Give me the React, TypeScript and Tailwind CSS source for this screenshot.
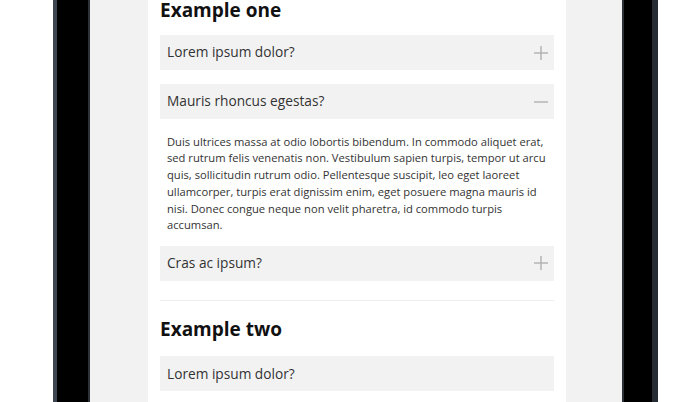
import { useState } from "react";

type Item = { q: string; a?: string };

const SECTIONS: { title: string; items: Item[]; icons: boolean }[] = [
  {
    title: "Example one",
    icons: true,
    items: [
      { q: "Lorem ipsum dolor?" },
      {
        q: "Mauris rhoncus egestas?",
        a: "Duis ultrices massa at odio lobortis bibendum. In commodo aliquet erat, sed rutrum felis venenatis non. Vestibulum sapien turpis, tempor ut arcu quis, sollicitudin rutrum odio. Pellentesque suscipit, leo eget laoreet ullamcorper, turpis erat dignissim enim, eget posuere magna mauris id nisi. Donec congue neque non velit pharetra, id commodo turpis accumsan.",
      },
      { q: "Cras ac ipsum?" },
    ],
  },
  {
    title: "Example two",
    icons: false,
    items: [{ q: "Lorem ipsum dolor?" }, { q: "Mauris rhoncus egestas?" }],
  },
];

function ToggleIcon({ open }: { open: boolean }) {
  return (
    <svg width="14" height="14" viewBox="0 0 14 14" className="shrink-0">
      <path d="M0 7h14" stroke="#b0b0b0" strokeWidth="1.4" />
      {!open && <path d="M7 0v14" stroke="#b0b0b0" strokeWidth="1.4" />}
    </svg>
  );
}

function Accordion({ items, initial, icons }: { items: Item[]; initial: number; icons: boolean }) {
  const [open, setOpen] = useState<number>(initial);
  return (
    <div className="flex flex-col">
      {items.map((item, i) => {
        const isOpen = open === i;
        return (
          <div key={i} className="mb-[14px]">
            <button
              onClick={() => setOpen(isOpen ? -1 : i)}
              className="w-full h-[35px] bg-[#f2f2f2] pl-[7px] pr-[6px] flex items-center justify-between text-left text-[13.7px] text-[#333]"
            >
              <span>{item.q}</span>
              {icons && <ToggleIcon open={isOpen} />}
            </button>
            {isOpen && item.a && (
              <p className="pl-[7px] pr-[6px] pt-[14.5px] -mb-[2.5px] text-[11.2px] leading-[16.8px] text-[#333]">
                {item.a}
              </p>
            )}
          </div>
        );
      })}
    </div>
  );
}

export default function App() {
  return (
    <div className="w-[700px] h-[402px] overflow-hidden bg-white flex font-['Open_Sans',sans-serif]">
      <div className="w-[53px] shrink-0 bg-white" />
      {/* left bezel */}
      <div className="w-[37px] shrink-0 bg-black border-l-[4px] border-l-[#3c4550] border-r-[2px] border-r-[#2e3236]" />

      {/* screen */}
      <div className="w-[532px] shrink-0 bg-[#f2f2f2] flex pl-[58px]">
        <div className="w-[418px] shrink-0 bg-white px-3">
          {SECTIONS.map((s, si) => (
            <div key={s.title} className={si > 0 ? "border-t border-[#eeeeee] mt-[5px] pt-[16px]" : "-mt-[2.5px]"}>
              <h2
                className={
                  si > 0
                    ? "text-[19px] leading-[24px] font-bold text-[#111] mb-[15.5px]"
                    : "text-[19px] leading-[24px] font-bold text-[#111] mb-[13.5px]"
                }
              >
                {s.title}
              </h2>
              <Accordion items={s.items} initial={si === 0 ? 1 : -1} icons={s.icons} />
            </div>
          ))}
        </div>
      </div>

      {/* right bezel */}
      <div className="w-[36px] shrink-0 bg-black border-l-[2px] border-l-[#2e3236] border-r-[6px] border-r-[#252b33]" />
      <div className="flex-1 bg-white" />
    </div>
  );
}
